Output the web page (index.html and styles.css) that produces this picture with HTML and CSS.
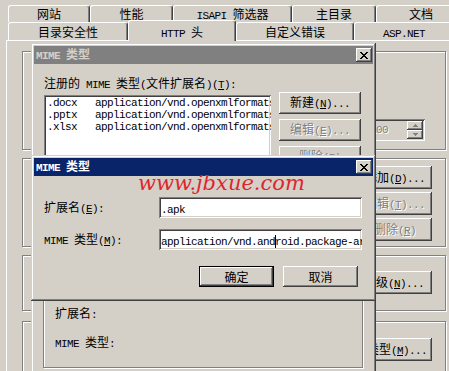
FILE: index.html
```html
<!DOCTYPE html>
<html lang="zh-CN">
<head>
<meta charset="utf-8">
<title>MIME 类型</title>
<link rel="stylesheet" href="styles.css">
</head>
<body>
<div class="sheet">
  <div class="tabs">
    <div class="tabrow row1">
      <div class="tab w82">网站</div>
      <div class="tab w83">性能</div>
      <div class="tab w119"><span class="m">ISAPI </span>筛选器</div>
      <div class="tab w84">主目录</div>
      <div class="tab w90">文档</div>
    </div>
    <div class="tabrow row2">
      <div class="tab w120">目录安全性</div>
      <div class="tab w108 sel"><span class="m">HTTP </span>头</div>
      <div class="tab w118">自定义错误</div>
      <div class="tab w100"><span class="m">ASP.NET</span></div>
    </div>
  </div>
  <div class="panel">
    <div class="grp g1">
      <div class="spin">
        <span class="m dis">100</span>
        <div class="spinbtns">
          <div class="sb"><svg width="5" height="3" viewBox="0 0 5 3" shape-rendering="crispEdges"><path d="M2 0h1v1h-1zM1 1h3v1h-3zM0 2h5v1h-5z"/></svg></div>
          <div class="sb"><svg width="5" height="3" viewBox="0 0 5 3" shape-rendering="crispEdges"><path d="M0 0h5v1h-5zM1 1h3v1h-3zM2 2h1v1h-1z"/></svg></div>
        </div>
      </div>
    </div>
    <div class="grp g2">
      <button class="btn bw74">添加<span class="m">(<u>D</u>)...</span></button>
      <button class="btn bw74 dis">编辑<span class="m">(<u>T</u>)...</span></button>
      <button class="btn bw74 dis">删除<span class="m">(<u>R</u>)</span></button>
    </div>
    <div class="grp g3">
      <button class="btn bw100">编辑分级<span class="m">(<u>N</u>)...</span></button>
    </div>
    <div class="grp g4">
      <button class="btn bw100"><span class="m">MIME </span>类型<span class="m">(<u>M</u>)...</span></button>
    </div>
  </div>
</div>

<div class="win mid">
  <div class="title"><span class="tt"><span class="m">MIME </span>类型</span><div class="close"><svg width="8" height="7" viewBox="0 0 8 7" shape-rendering="crispEdges"><path d="M0 0h2v1h-2zM6 0h2v1h-2zM1 1h2v1h-2zM5 1h2v1h-2zM2 2h4v1h-4zM3 3h2v1h-2zM2 4h4v1h-4zM1 5h2v1h-2zM5 5h2v1h-2zM0 6h2v1h-2zM6 6h2v1h-2z"/></svg></div></div>
  <div class="body">
    <div class="mid-main">
      <div class="mid-left">
        <div class="lbl">注册的<span class="m"> MIME </span>类型<span class="m">(</span>文件扩展名<span class="m">)(<u>T</u>):</span></div>
        <div class="field list">
          <div class="item"><span class="ext m">.docx</span><span class="m">application/vnd.openxmlformats-officedocument.wordprocessingml.document</span></div>
          <div class="item"><span class="ext m">.pptx</span><span class="m">application/vnd.openxmlformats-officedocument.presentationml.presentation</span></div>
          <div class="item"><span class="ext m">.xlsx</span><span class="m">application/vnd.openxmlformats-officedocument.spreadsheetml.sheet</span></div>
        </div>
      </div>
      <div class="btncol">
        <button class="btn bw82">新建<span class="m">(<u>N</u>)...</span></button>
        <button class="btn bw82 dis">编辑<span class="m">(<u>E</u>)...</span></button>
        <button class="btn bw82 dis">删除<span class="m">(<u>R</u>)</span></button>
      </div>
    </div>
    <div class="grp sub">
      <div class="row">扩展名<span class="m">:</span></div>
      <div class="row"><span class="m">MIME </span>类型<span class="m">:</span></div>
    </div>
  </div>
</div>

<div class="win front">
  <div class="title"><span class="tt"><span class="m">MIME </span>类型</span><div class="close"><svg width="8" height="7" viewBox="0 0 8 7" shape-rendering="crispEdges"><path d="M0 0h2v1h-2zM6 0h2v1h-2zM1 1h2v1h-2zM5 1h2v1h-2zM2 2h4v1h-4zM3 3h2v1h-2zM2 4h4v1h-4zM1 5h2v1h-2zM5 5h2v1h-2zM0 6h2v1h-2zM6 6h2v1h-2z"/></svg></div></div>
  <div class="body">
    <div class="form">
      <div class="row">扩展名<span class="m">(<u>E</u>):</span></div>
      <div class="field tb"><span class="m">.apk</span></div>
      <div class="row"><span class="m">MIME </span>类型<span class="m">(<u>M</u>):</span></div>
      <div class="field tb"><span class="m">application/vnd.and</span><i class="caret"></i><span class="m">roid.package-archive</span></div>
    </div>
    <div class="actions">
      <button class="btn bw75 def">确定</button>
      <button class="btn bw75">取消</button>
    </div>
  </div>
</div>

<div class="wm">www.jbxue.com</div>
</body>
</html>
```
FILE: styles.css
```css
* { box-sizing: border-box; }
html, body { margin: 0; padding: 0; }
body {
  width: 449px;
  height: 371px;
  overflow: hidden;
  position: relative;
  background: #d4d0c8;
  color: #000;
  font-family: "Noto Sans CJK SC", sans-serif;
  font-size: 12px;
  line-height: 12px;
}
.m {
  font-family: "Liberation Mono", "DejaVu Sans Mono", monospace;
  font-size: 11px;
  letter-spacing: -0.6px;
}
u { text-decoration: underline; text-underline-offset: 1px; }

/* ---------- property sheet ---------- */
.tabs { padding: 5px 0 0 8px; }
.tabrow { display: flex; align-items: flex-start; white-space: nowrap; }
.tab {
  flex: none;
  height: 17px;
  line-height: 16px;
  text-align: center;
  border-top: 1px solid #fff;
  border-left: 1px solid #fff;
  border-right: 1px solid #404040;
  border-radius: 3px 3px 0 0;
  box-shadow: inset -1px 0 #808080;
  background: #d4d0c8;
}
.row2 .tab { height: 18px; line-height: 17px; }
.row2 .tab.sel {
  height: 21px;
  padding-top: 2px;
  margin: -2px 0 -1px;
  position: relative;
  z-index: 1;
}
.w82 { width: 82px; }
.w83 { width: 83px; }
.w84 { width: 84px; }
.w90 { width: 90px; }
.w100 { width: 100px; }
.w108 { width: 108px; }
.w118 { width: 118px; }
.w119 { width: 119px; }
.w120 { width: 120px; }

.panel {
  margin-left: 6px;
  border-top: 1px solid #fff;
  border-left: 1px solid #fff;
  padding: 10px 0 0 15px;
}
.grp {
  width: 424px;
  border: 1px solid #808080;
  box-shadow: 1px 1px 0 #fff, inset 1px 1px 0 #fff;
}
.g1 {
  height: 99px;
  display: flex;
  justify-content: flex-end;
  align-items: flex-start;
  padding: 67px 20px 0 0;
}
.g2 {
  height: 89px;
  margin-top: 8px;
  display: flex;
  flex-direction: column;
  align-items: flex-end;
  gap: 3px;
  padding: 7px 13px 0 0;
}
.g3 {
  height: 56px;
  margin-top: 8px;
  display: flex;
  flex-direction: column;
  align-items: flex-end;
  padding: 15px 13px 0 0;
}
.g4 {
  height: 60px;
  margin-top: 10px;
  display: flex;
  flex-direction: column;
  align-items: flex-end;
  padding: 16px 13px 0 0;
}

.spin {
  width: 59px;
  height: 22px;
  display: flex;
  align-items: center;
  padding: 2px 2px 2px 4px;
  background: #d4d0c8;
  box-shadow: inset 1px 1px #808080, inset -1px -1px #fff, inset 2px 2px #404040, inset -2px -2px #d4d0c8;
}
.spinbtns { margin-left: auto; display: flex; flex-direction: column; align-self: stretch; }
.sb {
  width: 16px;
  height: 9px;
  display: flex;
  align-items: center;
  justify-content: center;
  box-shadow: inset -1px -1px #404040, inset 1px 1px #fff, inset -2px -2px #808080;
}
.sb svg { fill: #808080; }

/* ---------- buttons ---------- */
button {
  font: inherit;
  color: inherit;
  border: 0;
  margin: 0;
  padding: 0;
  background: #d4d0c8;
}
.btn {
  display: block;
  flex: none;
  text-align: center;
  white-space: nowrap;
  height: 23px;
  box-shadow: inset -1px -1px #404040, inset 1px 1px #fff, inset -2px -2px #808080;
}
.btn.dis, .dis { color: #808080; text-shadow: 1px 1px 0 #fff; }
.bw74 { width: 74px; }
.bw100 { width: 100px; }
.bw82 { width: 82px; height: 22px; }
.bw75 { width: 75px; height: 21px; }
.btn.def {
  box-shadow: inset 0 0 0 1px #000, inset -2px -2px #404040, inset 2px 2px #fff, inset -3px -3px #808080;
}

/* ---------- windows ---------- */
.win {
  position: absolute;
  left: 31px;
  width: 345px;
  padding: 3px;
  background: #d4d0c8;
  box-shadow: inset -1px -1px #404040, inset 1px 1px #d4d0c8, inset -2px -2px #808080, inset 2px 2px #fff;
}
.win.mid { top: 43px; height: 340px; }
.win.front { top: 155px; height: 146px; z-index: 2; }
.title {
  height: 18px;
  display: flex;
  align-items: center;
  padding-left: 2px;
  font-weight: bold;
  white-space: nowrap;
}
.title .m { font-weight: bold; }
.mid .title { background: #808080; color: #d4d0c8; }
.front .title { background: #0a246a; color: #fff; }
.close {
  margin-left: auto;
  margin-right: 1px;
  width: 16px;
  height: 14px;
  display: flex;
  align-items: center;
  justify-content: center;
  background: #d4d0c8;
  box-shadow: inset -1px -1px #404040, inset 1px 1px #fff, inset -2px -2px #808080;
}
.close svg { fill: #000; }

.field {
  background: #fff;
  box-shadow: inset 1px 1px #808080, inset -1px -1px #fff, inset 2px 2px #404040, inset -2px -2px #d4d0c8;
}

.mid .body { padding: 13px 0 0 10px; }
.mid-main { display: flex; gap: 8px; }
.mid-left { width: 227px; }
.lbl { height: 12px; white-space: nowrap; margin-bottom: 6px; }
.list {
  height: 90px;
  padding: 2px 2px 2px 3px;
  overflow: hidden;
  white-space: nowrap;
}
.item { display: flex; height: 12px; }
.ext { flex: none; width: 48px; }
.btncol { display: flex; flex-direction: column; gap: 5px; padding-top: 15px; }

.sub {
  width: 320px;
  height: 168px;
  margin: 15px 0 0 -1px;
  display: flex;
  flex-direction: column;
  justify-content: flex-end;
  gap: 15px;
  padding: 0 0 17px 11px;
}
.row { white-space: nowrap; }

.front .body { padding: 21px 11px 0 10px; }
.form {
  display: grid;
  grid-template-columns: 115px 203px;
  grid-auto-rows: 21px;
  row-gap: 11px;
  align-items: center;
}
.tb {
  height: 21px;
  padding: 5px 2px 0 2px;
  overflow: hidden;
  white-space: nowrap;
}
.caret {
  display: inline-block;
  width: 1px;
  height: 13px;
  margin-right: -1px;
  background: #000;
  vertical-align: -3px;
}
.actions {
  display: flex;
  justify-content: flex-end;
  gap: 9px;
  margin-top: 16px;
  padding-right: 4px;
}

.wm {
  position: absolute;
  left: 138px;
  top: 171px;
  z-index: 3;
  font-family: "DejaVu Serif", serif;
  font-style: italic;
  font-size: 21px;
  line-height: 24px;
  color: #e0262c;
  white-space: nowrap;
}
```
